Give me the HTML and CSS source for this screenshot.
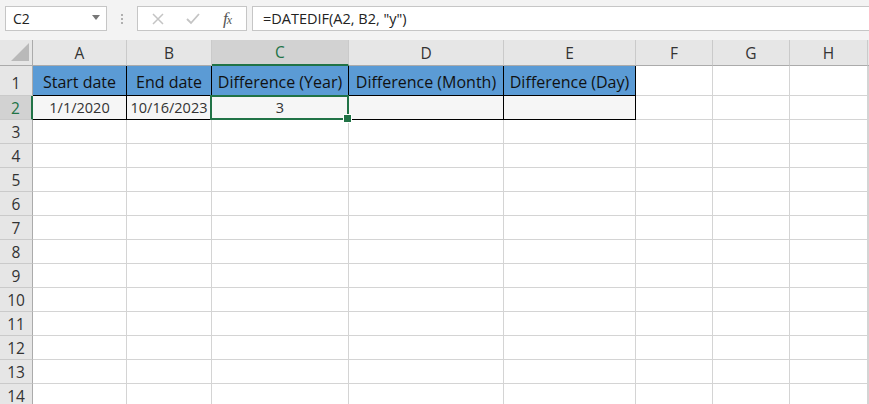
FILE: index.html
```html
<!DOCTYPE html>
<html>
<head>
<meta charset="utf-8">
<link rel="stylesheet" href="styles.css">
</head>
<body>
<div class="topbar">
  <div class="namebox">
    <span class="name">C2</span>
    <svg class="dd" width="8" height="5" viewBox="0 0 8 5"><path d="M0 0H8L4 5Z" fill="#777"/></svg>
  </div>
  <div class="dots"><i></i><i></i><i></i></div>
  <div class="fxbox">
    <svg class="ic" width="14" height="14" viewBox="0 0 14 14"><path d="M2 2L12 12M12 2L2 12" stroke="#c4c4c4" stroke-width="1.5" fill="none"/></svg>
    <svg class="ic" width="16" height="14" viewBox="0 0 16 14"><path d="M2 7L6 11L14 2" stroke="#c4c4c4" stroke-width="1.8" fill="none"/></svg>
    <span class="fx">f<sub>x</sub></span>
  </div>
  <div class="formula">=DATEDIF(A2, B2, "y")</div>
</div>
<div class="sheet">
  <div class="corner"><svg width="18" height="18" viewBox="0 0 18 18"><path d="M18 0V18H0Z" fill="#b9b9b9"/></svg></div>
  <div class="ch">A</div>
  <div class="ch">B</div>
  <div class="ch sel">C</div>
  <div class="ch">D</div>
  <div class="ch">E</div>
  <div class="ch">F</div>
  <div class="ch">G</div>
  <div class="ch">H</div>
  <div class="ch last"></div>

  <div class="rh r1">1</div>
  <div class="c hd">Start date</div>
  <div class="c hd">End date</div>
  <div class="c hd">Difference (Year)</div>
  <div class="c hd">Difference (Month)</div>
  <div class="c hd">Difference (Day)</div>
  <div class="c"></div><div class="c"></div><div class="c"></div><div class="c"></div>

  <div class="rh sel">2</div>
  <div class="c dt">1/1/2020</div>
  <div class="c dt">10/16/2023</div>
  <div class="c dt active">3</div>
  <div class="c dt"></div>
  <div class="c dt"></div>
  <div class="c"></div><div class="c"></div><div class="c"></div><div class="c"></div>

  <div class="rh">3</div><div class="c"></div><div class="c"></div><div class="c"></div><div class="c"></div><div class="c"></div><div class="c"></div><div class="c"></div><div class="c"></div><div class="c"></div>
  <div class="rh">4</div><div class="c"></div><div class="c"></div><div class="c"></div><div class="c"></div><div class="c"></div><div class="c"></div><div class="c"></div><div class="c"></div><div class="c"></div>
  <div class="rh">5</div><div class="c"></div><div class="c"></div><div class="c"></div><div class="c"></div><div class="c"></div><div class="c"></div><div class="c"></div><div class="c"></div><div class="c"></div>
  <div class="rh">6</div><div class="c"></div><div class="c"></div><div class="c"></div><div class="c"></div><div class="c"></div><div class="c"></div><div class="c"></div><div class="c"></div><div class="c"></div>
  <div class="rh">7</div><div class="c"></div><div class="c"></div><div class="c"></div><div class="c"></div><div class="c"></div><div class="c"></div><div class="c"></div><div class="c"></div><div class="c"></div>
  <div class="rh">8</div><div class="c"></div><div class="c"></div><div class="c"></div><div class="c"></div><div class="c"></div><div class="c"></div><div class="c"></div><div class="c"></div><div class="c"></div>
  <div class="rh">9</div><div class="c"></div><div class="c"></div><div class="c"></div><div class="c"></div><div class="c"></div><div class="c"></div><div class="c"></div><div class="c"></div><div class="c"></div>
  <div class="rh">10</div><div class="c"></div><div class="c"></div><div class="c"></div><div class="c"></div><div class="c"></div><div class="c"></div><div class="c"></div><div class="c"></div><div class="c"></div>
  <div class="rh">11</div><div class="c"></div><div class="c"></div><div class="c"></div><div class="c"></div><div class="c"></div><div class="c"></div><div class="c"></div><div class="c"></div><div class="c"></div>
  <div class="rh">12</div><div class="c"></div><div class="c"></div><div class="c"></div><div class="c"></div><div class="c"></div><div class="c"></div><div class="c"></div><div class="c"></div><div class="c"></div>
  <div class="rh">13</div><div class="c"></div><div class="c"></div><div class="c"></div><div class="c"></div><div class="c"></div><div class="c"></div><div class="c"></div><div class="c"></div><div class="c"></div>
  <div class="rh">14</div><div class="c"></div><div class="c"></div><div class="c"></div><div class="c"></div><div class="c"></div><div class="c"></div><div class="c"></div><div class="c"></div><div class="c"></div>
</div>
</body>
</html>
```

FILE: styles.css
```css
* { box-sizing: border-box; }
html, body { margin: 0; padding: 0; }
body {
  width: 869px;
  height: 404px;
  overflow: hidden;
  background: #fff;
  font-family: "Open Sans", "Noto Sans", sans-serif;
  color: #222;
}
.topbar {
  height: 40px;
  background: #f3f3f3;
  display: flex;
  align-items: flex-start;
  padding-top: 6px;
  padding-left: 5px;
}
.namebox {
  width: 102px;
  height: 25px;
  background: #fff;
  border: 1px solid #c6c6c6;
  display: flex;
  align-items: center;
  justify-content: space-between;
  padding: 0 6px 0 7px;
}
.name { font-size: 14px; color: #222; }
.dd { margin-top: -2px; }
.dots {
  width: 30px;
  height: 25px;
  display: flex;
  flex-direction: column;
  align-items: center;
  justify-content: center;
  gap: 2px;
}
.dots i { display: block; width: 2px; height: 2px; background: #b0b0b0; }
.fxbox {
  width: 110px;
  height: 25px;
  background: #fff;
  border: 1px solid #c6c6c6;
  display: flex;
  align-items: center;
  padding-left: 13px;
  gap: 20px;
}
.fx {
  font-family: "Liberation Serif", serif;
  font-style: italic;
  font-size: 17px;
  color: #555;
  margin-left: 2px;
  line-height: 1;
}
.fx sub { font-size: 12px; vertical-align: 0; position: relative; top: 0; margin-left: -1px; }
.formula {
  flex: 1;
  height: 25px;
  margin-left: 5px;
  background: #fff;
  border: 1px solid #c6c6c6;
  border-right: none;
  font-size: 14.5px;
  line-height: 23px;
  padding-left: 10px;
  color: #222;
}
.sheet {
  display: grid;
  grid-template-columns: 33px 94px 85px 137px 155px 132px 77px 77px 78px 1fr;
  grid-template-rows: 26px 30px;
  grid-auto-rows: 24px;
}
.corner, .ch {
  background: #e6e6e6;
  border-bottom: 1px solid #ababab;
  border-right: 1px solid #cacaca;
  font-size: 15.5px;
  color: #333;
  display: flex;
  align-items: center;
  justify-content: center;
}
.corner { justify-content: flex-end; align-items: flex-end; padding: 0 3px 4px 0; border-right-color: #ababab; }
.ch.sel {
  background: #d2d2d2;
  color: #217346;
  border-bottom: 2px solid #217346;
}
.rh {
  background: #e6e6e6;
  border-right: 1px solid #ababab;
  border-bottom: 1px solid #cacaca;
  font-size: 15.5px;
  color: #333;
  display: flex;
  align-items: flex-end;
  justify-content: center;
  padding-bottom: 0;
}
.rh.r1 { padding-bottom: 1px; }
.rh.sel {
  background: #d2d2d2;
  color: #217346;
  border-right: 2px solid #217346;
}
.c {
  border-right: 1px solid #d4d4d4;
  border-bottom: 1px solid #d4d4d4;
  font-size: 14.5px;
  display: flex;
  align-items: center;
  justify-content: center;
  white-space: nowrap;
  position: relative;
}
.c.hd {
  background: #5b9bd5;
  color: #111;
  font-size: 16px;
  padding-top: 2px;
  border-right-color: #000;
  border-bottom-color: #000;
}
.c.dt {
  background: #f6f6f6;
  color: #333;
  border-right-color: #000;
  border-bottom-color: #000;
}
.c.active::after {
  content: "";
  position: absolute;
  left: -2px;
  top: -1px;
  right: -1px;
  bottom: -1px;
  border: 2px solid #217346;
  pointer-events: none;
}
.c.active::before {
  content: "";
  position: absolute;
  right: -4px;
  bottom: -4px;
  width: 7px;
  height: 7px;
  background: #217346;
  border: 1px solid #fff;
  z-index: 2;
}
.ch.last { border-right: none; }
```
